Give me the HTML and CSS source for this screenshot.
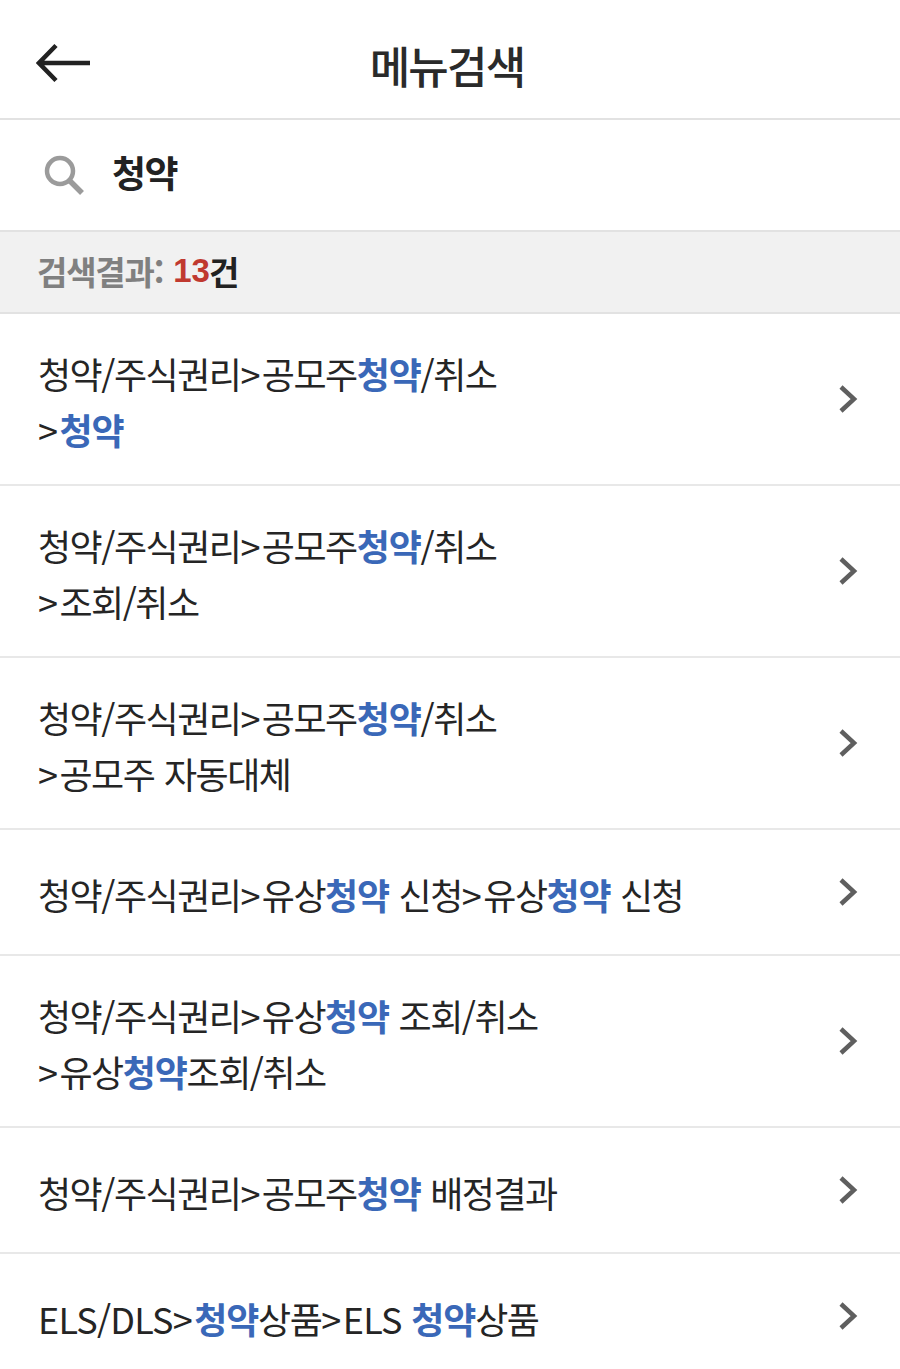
FILE: index.html
```html
<!DOCTYPE html>
<html lang="ko">
<head>
    <meta charset="UTF-8">
    <meta name="viewport" content="width=device-width, initial-scale=1.0">
    <title>메뉴검색</title>
    <link rel="stylesheet" href="styles.css">
</head>
<body>
    <header class="top-bar">
        <svg class="back-icon" viewBox="0 0 54 40" width="54" height="40" aria-hidden="true">
            <path d="M54 20H4M20 2.500L3 20l17 17.500" fill="none" stroke="#222" stroke-width="4.500"/>
        </svg>
        <h1 class="page-title">메뉴검색</h1>
    </header>

    <div class="search-row">
        <svg class="search-icon" viewBox="0 0 42 42" width="42" height="42" aria-hidden="true">
            <circle cx="17" cy="17" r="13" fill="none" stroke="#9b9b9b" stroke-width="4.500"/>
            <path d="M26 26l13 13" fill="none" stroke="#9b9b9b" stroke-width="5.500"/>
        </svg>
        <span class="search-term">청약</span>
    </div>

    <div class="result-count">검색결과: <em class="count-num">13</em><span class="count-unit">건</span></div>

    <ul class="result-list">
        <li class="result-item two-line">
            <a class="result-text">청약/주식권리<i>&gt;</i>공모주<b>청약</b>/취소<br><i>&gt;</i><b>청약</b></a>
            <svg class="chevron" viewBox="0 0 20 30" width="20" height="30"><path d="M3 3l13 12L3 27" fill="none" stroke="#5f5f5f" stroke-width="4.500"/></svg>
        </li>
        <li class="result-item two-line">
            <a class="result-text">청약/주식권리<i>&gt;</i>공모주<b>청약</b>/취소<br><i>&gt;</i>조회/취소</a>
            <svg class="chevron" viewBox="0 0 20 30" width="20" height="30"><path d="M3 3l13 12L3 27" fill="none" stroke="#5f5f5f" stroke-width="4.500"/></svg>
        </li>
        <li class="result-item two-line">
            <a class="result-text">청약/주식권리<i>&gt;</i>공모주<b>청약</b>/취소<br><i>&gt;</i>공모주 자동대체</a>
            <svg class="chevron" viewBox="0 0 20 30" width="20" height="30"><path d="M3 3l13 12L3 27" fill="none" stroke="#5f5f5f" stroke-width="4.500"/></svg>
        </li>
        <li class="result-item">
            <a class="result-text">청약/주식권리<i>&gt;</i>유상<b>청약</b> 신청<i>&gt;</i>유상<b>청약</b> 신청</a>
            <svg class="chevron" viewBox="0 0 20 30" width="20" height="30"><path d="M3 3l13 12L3 27" fill="none" stroke="#5f5f5f" stroke-width="4.500"/></svg>
        </li>
        <li class="result-item two-line">
            <a class="result-text">청약/주식권리<i>&gt;</i>유상<b>청약</b> 조회/취소<br><i>&gt;</i>유상<b>청약</b>조회/취소</a>
            <svg class="chevron" viewBox="0 0 20 30" width="20" height="30"><path d="M3 3l13 12L3 27" fill="none" stroke="#5f5f5f" stroke-width="4.500"/></svg>
        </li>
        <li class="result-item">
            <a class="result-text">청약/주식권리<i>&gt;</i>공모주<b>청약</b> 배정결과</a>
            <svg class="chevron" viewBox="0 0 20 30" width="20" height="30"><path d="M3 3l13 12L3 27" fill="none" stroke="#5f5f5f" stroke-width="4.500"/></svg>
        </li>
        <li class="result-item">
            <a class="result-text"><span class="latin">ELS/DLS</span><i>&gt;</i><b>청약</b>상품<i>&gt;</i><span class="latin">ELS</span> <b>청약</b>상품</a>
            <svg class="chevron" viewBox="0 0 20 30" width="20" height="30"><path d="M3 3l13 12L3 27" fill="none" stroke="#5f5f5f" stroke-width="4.500"/></svg>
        </li>
    </ul>
</body>
</html>
```

FILE: styles.css
```css
* {
    margin: 0;
    padding: 0;
    box-sizing: border-box;
}

body {
    font-family: "Noto Sans CJK KR", "Noto Sans", sans-serif;
    background: #fff;
    color: #222;
    overflow: hidden;
}

.top-bar {
    height: 120px;
    border-bottom: 2px solid #e2e2e2;
    display: flex;
    align-items: center;
    justify-content: center;
    position: relative;
}

.back-icon {
    position: absolute;
    left: 36px;
    top: 43px;
}

.page-title {
    font-size: 44px;
    font-weight: 500;
    letter-spacing: -1.800px;
    line-height: 1;
    color: #2a2a2a;
    margin: 12px 6px 0 0;
}

.search-row {
    height: 110px;
    padding-left: 43px;
    display: flex;
    align-items: center;
    gap: 27px;
}

.search-term {
    font-size: 37px;
    font-weight: 700;
    letter-spacing: -1.500px;
    line-height: 1;
    margin-top: -5px;
}

.search-icon {
    flex: none;
}

.result-count {
    height: 84px;
    padding: 0 0 3px 37px;
    background: #f1f1f1;
    border-top: 2px solid #e2e2e2;
    border-bottom: 2px solid #e2e2e2;
    display: flex;
    align-items: center;
    font-size: 33px;
    font-weight: 700;
    letter-spacing: -1.200px;
    color: #808080;
    white-space: pre;
}

.count-num {
    font-family: "Liberation Sans", sans-serif;
    font-style: normal;
    color: #c0392f;
    letter-spacing: 0;
    margin-left: 2px;
}

.count-unit {
    color: #222;
    margin-left: -1px;
}

.result-list {
    list-style: none;
}

.result-item {
    height: 126px;
    padding: 0 42px 0 38px;
    border-bottom: 2px solid #e8e8e8;
    display: flex;
    align-items: center;
    justify-content: space-between;
}

.result-item.two-line {
    height: 172px;
}

.result-text {
    font-size: 36px;
    line-height: 56px;
    letter-spacing: -1.500px;
    word-spacing: 1px;
    color: #252525;
    padding-top: 3px;
}

.result-text b {
    color: #3a68b8;
    font-weight: 700;
    letter-spacing: -1.200px;
}

.result-text i {
    font-style: normal;
    padding-right: 3px;
}

.latin {
    letter-spacing: -0.800px;
}

.chevron {
    flex: none;
}
```
